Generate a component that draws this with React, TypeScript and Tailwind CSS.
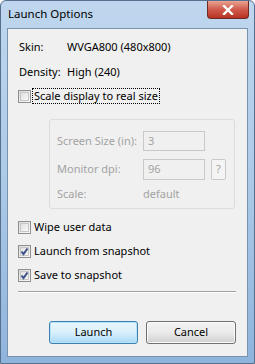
import React from 'react';

function Check({ checked }: { checked?: boolean }) {
  return (
    <span className="relative flex h-[13px] w-[13px] shrink-0 items-center justify-center border border-[#8e8f8f] bg-gradient-to-br from-[#dcdcdc] to-[#fbfbfb]">
      <span className="absolute inset-[1px] border border-[#c6c6c6] bg-gradient-to-br from-[#e0e0e0] to-[#f8f8f8]" />
      {checked && (
        <svg viewBox="0 0 11 11" className="relative h-[11px] w-[11px]">
          <path d="M2.5 5.5 L4.5 8 L8.5 2.5" fill="none" stroke="#3c4f87" strokeWidth="2" />
        </svg>
      )}
    </span>
  );
}

function CheckRow({ label, checked, focus }: { label: string; checked?: boolean; focus?: boolean }) {
  return (
    <div className="flex h-[16px] items-center whitespace-nowrap">
      <Check checked={checked} />
      <span
        className={
          focus
            ? 'ml-[1px] border border-dotted border-black px-[1px] leading-[14px]'
            : 'ml-[3px] leading-[16px]'
        }
      >
        {label}
      </span>
    </div>
  );
}

export default function App() {
  return (
    <div
      className="flex h-[364px] w-[255px] flex-col overflow-hidden rounded-t-[6px] border border-[#54708e] bg-gradient-to-b from-[#bfd6ee] via-[#acc9e8] to-[#8fb4dc] text-[11px] text-black"
      style={{ fontFamily: '"Noto Sans", "Open Sans", sans-serif' }}
    >
      {/* Title bar */}
      <div className="flex h-[27px] shrink-0 items-start">
        <div className="pl-[7px] pt-[5px] text-[11.5px] leading-[16px] text-black">Launch Options</div>
        <div className="ml-auto mr-[5px] flex h-[18px] w-[42px] items-center justify-center rounded-b-[4px] border border-t-0 border-[#6d2a25] bg-gradient-to-b from-[#e8a392] via-[#cf5a4b] to-[#b8321f]">
          <svg viewBox="0 0 12 10" className="h-[10px] w-[12px]">
            <path d="M2 1 L10 9 M10 1 L2 9" stroke="#fff" strokeWidth="2.4" strokeLinecap="square" />
          </svg>
        </div>
      </div>

      {/* Client area */}
      <div className="mx-[6px] mb-[6px] flex flex-1 flex-col border border-[#7a93ad] bg-[#f0f0f0] pl-[10px] pr-[11px]">
        <div className="mt-[10px] ml-[1px] flex h-[16px] items-center">
          <span className="w-[48px]">Skin:</span>
          <span>WVGA800 (480x800)</span>
        </div>
        <div className="mt-[9px] ml-[1px] flex h-[16px] items-center">
          <span className="w-[48px]">Density:</span>
          <span>High (240)</span>
        </div>
        <div className="mt-[8px]">
          <CheckRow label="Scale display to real size" focus />
        </div>

        {/* Disabled group */}
        <div className="ml-[31px] mr-[1px] mt-[15px] flex h-[90px] flex-col rounded-[3px] border border-[#dcdcdc] pl-[7px] text-[#a3a3a3]">
          <div className="mt-[11px] flex h-[20px] items-center whitespace-nowrap">
            <span className="w-[86px]">Screen Size (in):</span>
            <div className="flex h-[20px] w-[62px] items-center border border-[#c9c9c9] bg-[#f0f0f0] pl-[4px]">3</div>
          </div>
          <div className="mt-[8px] flex h-[21px] items-center whitespace-nowrap">
            <span className="w-[86px]">Monitor dpi:</span>
            <div className="flex h-[21px] w-[62px] items-center border border-[#c9c9c9] bg-[#f0f0f0] pl-[4px]">96</div>
            <div className="ml-[6px] flex h-[21px] w-[15px] items-center justify-center rounded-[2px] border border-[#c9c9c9] bg-[#f4f4f4]">?</div>
          </div>
          <div className="mt-[6px] flex h-[16px] items-center">
            <span className="w-[86px]">Scale:</span>
            <span>default</span>
          </div>
        </div>

        <div className="mt-[10px] flex flex-col gap-[8px]">
          <CheckRow label="Wipe user data" />
          <CheckRow label="Launch from snapshot" checked />
          <CheckRow label="Save to snapshot" checked />
        </div>

        <div className="mt-[8px] h-[2px] border-t border-b border-t-[#a0a0a0] border-b-white" />

        <div className="mt-[28px] flex justify-end gap-[8px]">
          <button className="h-[23px] w-[89px] rounded-[3px] border border-[#3c7fb1] bg-gradient-to-b from-[#eaf6fd] via-[#d9f0fc] to-[#a7d9f5] shadow-[inset_0_0_0_1px_#b5e4fc]">
            Launch
          </button>
          <button className="h-[23px] w-[90px] rounded-[3px] border border-[#707070] bg-gradient-to-b from-[#f2f2f2] via-[#ebebeb] to-[#cfcfcf] shadow-[inset_0_0_0_1px_#fcfcfc]">
            Cancel
          </button>
        </div>
      </div>
    </div>
  );
}
